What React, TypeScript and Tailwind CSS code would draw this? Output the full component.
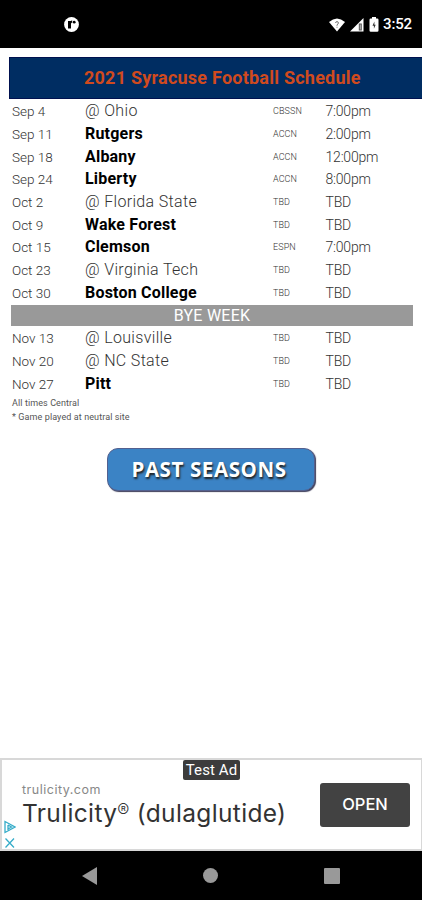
import clsx from "clsx";

interface Game {
  date: string;
  opponent: string;
  home: boolean;
  network: string;
  time: string;
}

const beforeBye: Game[] = [
  { date: "Sep 4", opponent: "Ohio", home: false, network: "CBSSN", time: "7:00pm" },
  { date: "Sep 11", opponent: "Rutgers", home: true, network: "ACCN", time: "2:00pm" },
  { date: "Sep 18", opponent: "Albany", home: true, network: "ACCN", time: "12:00pm" },
  { date: "Sep 24", opponent: "Liberty", home: true, network: "ACCN", time: "8:00pm" },
  { date: "Oct 2", opponent: "Florida State", home: false, network: "TBD", time: "TBD" },
  { date: "Oct 9", opponent: "Wake Forest", home: true, network: "TBD", time: "TBD" },
  { date: "Oct 15", opponent: "Clemson", home: true, network: "ESPN", time: "7:00pm" },
  { date: "Oct 23", opponent: "Virginia Tech", home: false, network: "TBD", time: "TBD" },
  { date: "Oct 30", opponent: "Boston College", home: true, network: "TBD", time: "TBD" },
];

const afterBye: Game[] = [
  { date: "Nov 13", opponent: "Louisville", home: false, network: "TBD", time: "TBD" },
  { date: "Nov 20", opponent: "NC State", home: false, network: "TBD", time: "TBD" },
  { date: "Nov 27", opponent: "Pitt", home: true, network: "TBD", time: "TBD" },
];

function StatusBar() {
  return (
    <header className="flex h-12 shrink-0 items-center justify-between bg-black pt-px pr-[10px] pl-16 text-white">
      <svg width="15" height="15" viewBox="0 0 15 15">
        <circle cx="7.5" cy="7.5" r="7.4" fill="#fff" />
        <path d="M4 4h3v7.5H4z" fill="#000" />
        <path d="M6.5 6.3q0-1.8 1.7-1.8" stroke="#000" strokeWidth="1.8" fill="none" />
        <circle cx="10.2" cy="5.2" r="1.4" fill="#000" />
      </svg>
      <div className="flex items-center">
        <svg className="mr-[5px]" width="16" height="14" viewBox="0 0 16 14">
          <path d="M0 4Q8-3.2 16 4L8 13.5z" fill="#fff" />
          <path d="M6.6 5q0-1.4 1.4-1.4T9.4 5Q9.4 6 8 6.8v1" stroke="#777" strokeWidth="1" fill="none" />
          <path d="M7.5 8.8h1v1h-1z" fill="#777" />
        </svg>
        <svg className="mr-[5px]" width="14" height="14" viewBox="0 0 14 14">
          <path d="M0 13.5L13.5 0v13.5z" fill="#fff" />
          <path d="M8.8 5.5h3v7h-3z" fill="#555" />
          <path d="M10.3 6.5v5" stroke="#bbb" strokeWidth="1" />
        </svg>
        <svg className="mr-[4px]" width="10" height="15" viewBox="0 0 10 15">
          <path d="M3 0h4v1.5h1.2q1.3 0 1.3 1.3v10.7q0 1.3-1.3 1.3H1.8q-1.3 0-1.3-1.3V2.8q0-1.3 1.3-1.3H3z" fill="#fff" />
          <path d="M5.4 4.5L3.5 8.8h1.4v3L6.7 7.8H5.4z" fill="#333" />
        </svg>
        <span className="text-[15px] leading-none font-medium tracking-[-0.15px]">3:52</span>
      </div>
    </header>
  );
}

function GameRow({ game }: { game: Game }) {
  return (
    <li className="grid h-[22.7px] grid-cols-[73px_188px_52.5px_1fr] items-center pl-3 leading-5 whitespace-nowrap text-[#333]">
      <span className="text-[13.5px] font-light">{game.date}</span>
      <span className={clsx("text-[16px]", game.home ? "font-bold tracking-[0.2px] text-black" : "font-light tracking-[0.33px]")}>
        {game.home ? game.opponent : `@ ${game.opponent}`}
      </span>
      <span className="text-[9px] font-light tracking-[0.1px]">{game.network}</span>
      <span className="text-[14px] font-light tracking-[-0.2px]">{game.time}</span>
    </li>
  );
}

function AdBanner() {
  return (
    <section className="relative flex h-[93px] shrink-0 items-center justify-between border-2 border-r border-[#d8d8d8] bg-white pr-[11px] pl-5">
      <div className="pt-0.5 font-['Inter',sans-serif] whitespace-nowrap">
        <p className="text-[12.5px] leading-[16px] tracking-[0.5px] text-[#888]">trulicity.com</p>
        <p className="text-[24.5px] leading-[31px] tracking-[0.35px] text-[#333]">
          Trulicity<span className="relative top-[-5px] text-[18px] leading-none font-light tracking-normal">®</span> (dulaglutide)
        </p>
      </div>
      <button className="h-[44px] w-[90px] rounded-[3px] bg-[#424242] font-['Inter',sans-serif] text-[16.5px] font-medium text-white">
        OPEN
      </button>
      <span className="absolute top-0 left-[181px] flex h-5 w-[57px] items-center justify-center rounded-[2px] bg-[#3c3c3c] pt-px text-[15px] tracking-[0.1px] whitespace-nowrap text-white">
        Test Ad
      </span>
      <svg className="absolute bottom-0 left-[2px]" width="12" height="29" viewBox="0 0 12 29" fill="none" stroke="#35acc9" strokeWidth="1.3">
        <path d="M1 1.5v11L11 7zM4 5v5M4 5l3.5 2L4 9" />
        <path d="M1.5 18.5l8.5 9M10 18.5l-8.5 9" />
      </svg>
    </section>
  );
}

function NavBar() {
  return (
    <nav className="flex h-[49px] shrink-0 items-center justify-between bg-black px-[82px]">
      <svg width="15" height="18" viewBox="0 0 15 18">
        <path d="M0 9L15 0v18z" fill="#999" />
      </svg>
      <div className="size-[15px] rounded-full bg-[#999]" />
      <div className="size-4 rounded-[1px] bg-[#999]" />
    </nav>
  );
}

export default function App() {
  return (
    <div className="flex h-[900px] w-[422px] flex-col overflow-hidden bg-white font-['Roboto',sans-serif]">
      <StatusBar />
      <main className="flex flex-1 flex-col pt-[9px]">
        <h1 className="ml-[9px] flex h-[42px] items-center border-y border-l border-[#00114f] bg-[#002d62] pb-px pl-[74px] text-[18px] font-bold tracking-[0.23px] whitespace-nowrap text-[#d04a1e]">
          2021 Syracuse Football Schedule
        </h1>
        <ul className="mt-px">
          {beforeBye.map((game) => (
            <GameRow key={game.date} game={game} />
          ))}
          <li className="my-px mr-[9px] ml-[11px] flex h-[20.7px] items-center justify-center bg-[#999] text-[16px] tracking-[0.25px] text-white">
            BYE WEEK
          </li>
          {afterBye.map((game) => (
            <GameRow key={game.date} game={game} />
          ))}
        </ul>
        <div className="pt-px pl-3 text-[9px] leading-[14px] tracking-[0.1px] text-[#555]">
          <p>All times Central</p>
          <p>* Game played at neutral site</p>
        </div>
        <button className="mt-6 h-[43px] w-[208px] self-center rounded-[11px] border border-[#53608f] bg-[#3b83c5] pr-1 font-['Open_Sans',sans-serif] text-[20.5px] font-bold tracking-[0.6px] text-white shadow-[1px_1px_1px_#3d3d59] [text-shadow:1px_2px_2px_#222]">
          PAST SEASONS
        </button>
      </main>
      <AdBanner />
      <NavBar />
    </div>
  );
}
